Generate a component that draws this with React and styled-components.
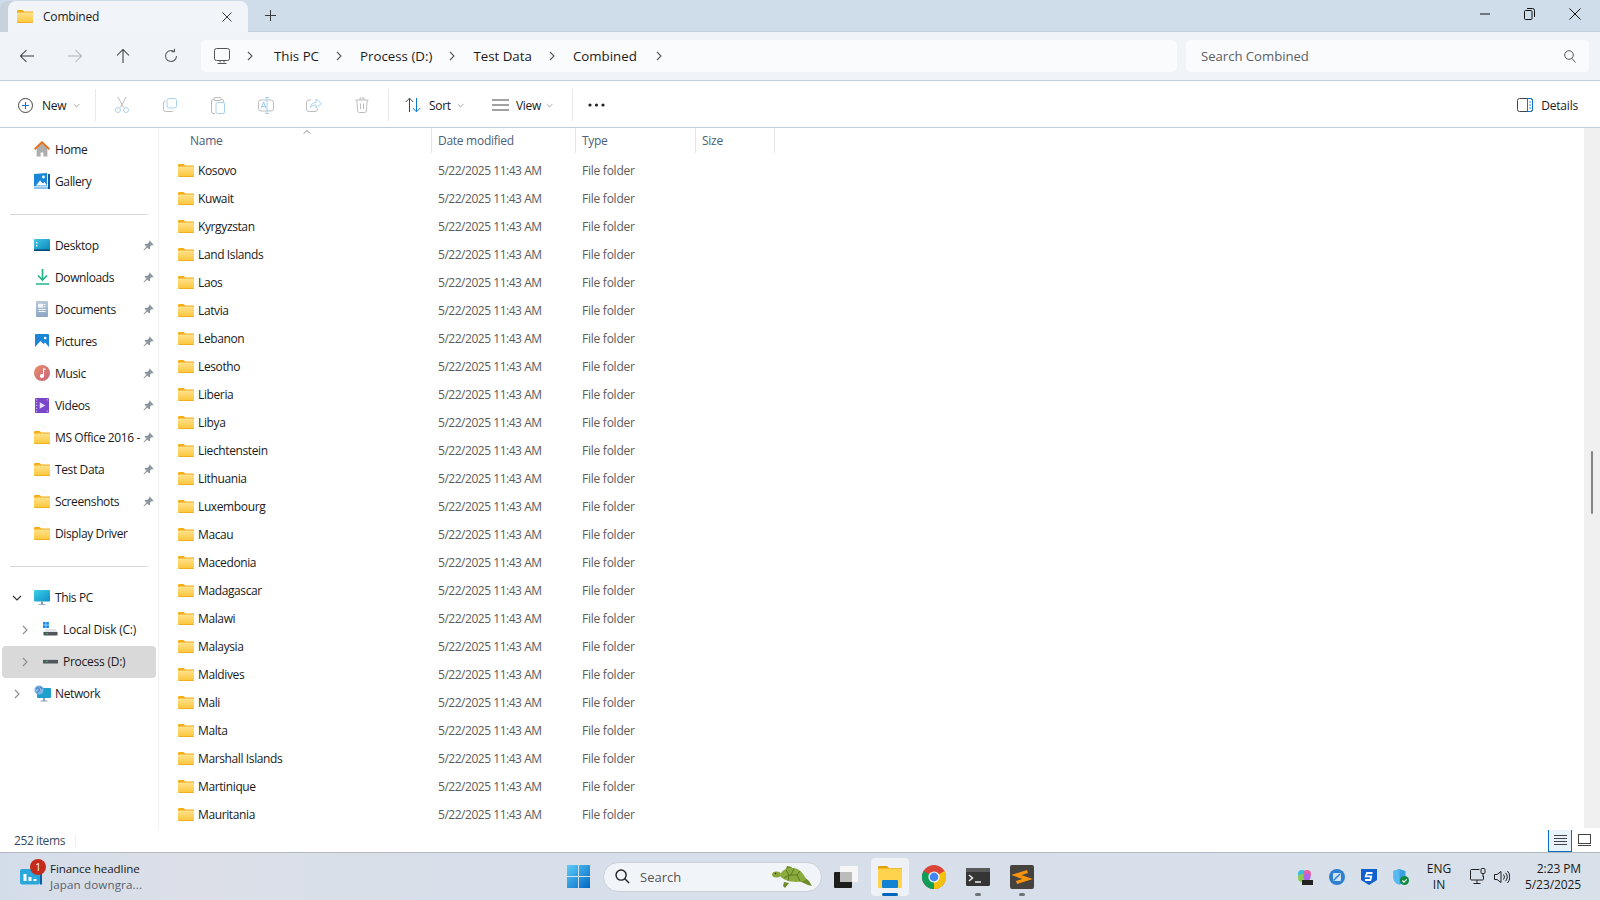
import React from "react";
import styled, { createGlobalStyle } from "styled-components";

const Global = createGlobalStyle`
  html, body { margin: 0; padding: 0; width: 1600px; height: 900px; overflow: hidden; background: #fff; }
  * { box-sizing: border-box; }
  svg { display: block; flex: none; }
`;
const FONT = `"Open Sans", "Noto Sans", "Liberation Sans", sans-serif`;

const Win = styled.div`
  width: 1600px; height: 900px; display: flex; flex-direction: column;
  font-family: ${FONT}; color: #1a1a1a; font-size: 12px; overflow: hidden;
`;
const TitleBar = styled.div`
  height: 32px; flex: none; background: #cfdcea; display: flex; align-items: flex-end; padding-left: 8px;
  border-bottom: 1px solid #c2d0de;
`;
const Tab = styled.div`
  width: 240px; height: 31px; background: #f1f4f8; border-radius: 8px 8px 0 0; display: flex; align-items: center;
  padding: 0 16px 0 9px; gap: 10px; font-size: 12px; margin-bottom: -1px; box-shadow: -8px 0 0 #c8d2dd;
`;
const TabTitle = styled.span` flex: 1; letter-spacing: -0.2px; `;
const NewTab = styled.div` width: 34px; margin-left: 5px; height: 31px; display: flex; align-items: center; justify-content: center; `;
const WinButtons = styled.div` margin-left: auto; display: flex; height: 31px; align-items: flex-start; padding-right: 3px; `;
const WinBtn = styled.div` width: 45px; height: 28px; display: flex; align-items: center; justify-content: center; `;

const NavBar = styled.div`
  height: 49px; flex: none; background: #f0f4f8; border-bottom: 1px solid #c0cedb; display: flex; align-items: center;
  padding: 0 11px 0 0;
`;
const NavBtns = styled.div` display: flex; width: 201px; padding-left: 3px; `;
const NavBtn = styled.div` width: 48px; height: 30px; display: flex; align-items: center; justify-content: center; `;
const Address = styled.div`
  width: 976px; height: 32px; background: #fafbfd; border-radius: 5px; display: flex; align-items: center; padding-left: 13px; font-size: 13.3px;
`;
const PcGlyph = styled.div` margin-right: 15px; `;
const Crumb = styled.span` margin: 0 ${p => p.$last ? 17 : 15}px 0 ${p => p.$first ? 19 : 16}px; `;
const SearchBox = styled.div`
  width: 403px; height: 32px; margin-left: 9px; background: #fafbfd; border-radius: 5px; display: flex; align-items: center;
  justify-content: space-between; padding: 0 13px 0 15px; color: #5f6062; font-size: 13.2px; letter-spacing: -0.05px;
`;

const Toolbar = styled.div`
  height: 47px; flex: none; background: #fff; border-bottom: 1px solid #c0cedb; display: flex; align-items: center; padding: 2px 22px 0 18px;
`;
const ToolSep = styled.div` width: 1px; height: 32px; background: #e8e8e8; margin: ${p => p.$m || "0"}; `;
const ToolBtn = styled.div`
  display: flex; align-items: center; gap: ${p => p.$gap || 8}px; letter-spacing: -0.3px; width: ${p => p.$w}px;
`;
const Caret = styled.span` margin-left: -2px; `;
const GhostIcons = styled.div` display: flex; margin-left: 2px; `;
const Ghost = styled.div` width: 48px; height: 30px; display: flex; align-items: center; justify-content: center; `;
const Details = styled.div` margin-left: auto; display: flex; align-items: center; gap: 8px; letter-spacing: -0.2px; `;

const Main = styled.div` flex: 1; display: flex; min-height: 0; background: #fff; position: relative; overflow: hidden; `;
const Sidebar = styled.div`
  width: 159px; flex: none; border-right: 1px solid #f0f0f0; padding: 6px 2px 0 2px; display: flex; flex-direction: column;
`;
const NavItem = styled.div`
  height: 32px; flex: none; display: flex; align-items: center; padding: 0 0 2px ${p => p.$indent ? 40 : 32}px; gap: 5px; border-radius: 4px;
  position: relative; background: ${p => p.$sel ? "#d9d9d9" : "transparent"}; letter-spacing: ${p => p.$indent ? -0.25 : -0.38}px; font-size: 12px; white-space: nowrap;
`;
const Chevron = styled.div` position: absolute; left: ${p => p.$x}px; top: 11px; `;
const Pin = styled.div` position: absolute; left: 141px; top: 10px; `;
const Divider = styled.div` height: 1px; flex: none; background: #d8d8d8; margin: 16px 8px 15px; `;
const IconSlot = styled.div` width: 16px; height: 18px; display: flex; align-items: center; justify-content: center; flex: none; `;
const FileArea = styled.div` flex: 1; min-width: 0; position: relative; display: flex; flex-direction: column; `;
const HeaderRow = styled.div` height: 25px; display: flex; color: #4c607a; font-size: 12px; letter-spacing: -0.28px; flex: none; `;
const HeadCell = styled.div`
  width: ${p => p.$w}px; border-right: 1px solid #e5e5e5; padding-left: ${p => p.$pad}px; padding-top: 4px; position: relative;
`;
const SortMark = styled.div` position: absolute; left: 144px; top: 0; `;
const Rows = styled.div` display: flex; flex-direction: column; padding-top: 3px; `;
const Row = styled.div` height: 28px; display: flex; align-items: center; flex: none; `;
const NameCell = styled.div` width: 272px; padding-left: 19px; display: flex; align-items: center; gap: 4px; letter-spacing: -0.38px; `;
const MetaCell = styled.div` width: ${p => p.$w}px; color: #5c5c5c; letter-spacing: ${p => p.$ls}px; padding-left: ${p => p.$pad}px; `;

const ScrollTrack = styled.div` position: absolute; top: 0; right: 0; width: 16px; height: 700px; background: #f0f0f0; `;
const ScrollThumb = styled.div` position: absolute; left: 7px; top: 323px; width: 2px; height: 63px; background: #848484; border-radius: 1px; `;

const StatusBar = styled.div` height: 22px; flex: none; background: #fff; display: flex; align-items: center; padding: 0 4px 2px 14px; color: #3a4a60; letter-spacing: -0.4px; `;
const StatusSep = styled.div` width: 1px; height: 13px; background: #efefef; margin-left: 10px; `;
const ViewBtns = styled.div` margin-left: auto; display: flex; align-self: flex-end; height: 24px; margin-bottom: -2px; `;
const ViewBtn = styled.div`
  width: 24px; height: 24px; display: flex; align-items: center; justify-content: center;
  border: 1px solid ${p => p.$on ? "#0a6fc2" : "transparent"}; background: ${p => p.$on ? "#e8f2fa" : "transparent"};
`;
const Taskbar = styled.div`
  height: 48px; flex: none; background: linear-gradient(90deg, #d3dde9, #dcdfe8 12%, #d6dfea 30%, #d8e0ea 100%);
  border-top: 1px solid #b4b8bf; display: grid; grid-template-columns: 540px 520px 1fr; align-items: center;
`;
const Widget = styled.div` display: flex; align-items: center; padding-left: 20px; position: relative; `;
const Badge = styled.div`
  position: absolute; left: 30px; top: -2px; width: 16px; height: 16px; border-radius: 50%; background: #c42b1c; color: #fff; font-size: 10px;
  display: flex; align-items: center; justify-content: center;
`;
const WidgetText = styled.div` margin-left: 8px; font-size: 11.6px; line-height: 16px; letter-spacing: -0.1px; `;
const Muted = styled.div` color: #5a6068; letter-spacing: 0.13px; `;
const TaskCenter = styled.div` display: flex; align-items: center; height: 47px; `;
const SearchPill = styled.div`
  width: 219px; height: 30px; margin-left: 5px; border-radius: 15px; background: #f1f4f8; border: 1px solid #c9d0d8; display: flex; align-items: center;
  padding: 0 7px 0 11px; color: #555; font-size: 13px;
`;
const PillLabel = styled.span` margin-left: 10px; flex: 1; `;
const TaskIcon = styled.div`
  width: ${p => p.$on ? 38 : 40}px; height: 38px; margin-left: ${p => p.$ml || 4}px; border-radius: 4px; display: flex; align-items: center; justify-content: center; position: relative;
  background: ${p => p.$on ? "#eef2f7" : "transparent"};
`;
const RunDot = styled.div`
  position: absolute; bottom: 0; left: 50%; transform: translateX(-50%); height: 3px; border-radius: 2px;
  width: ${p => p.$on ? 16 : 6}px; background: ${p => p.$on ? "#0067c0" : "#6f7478"};
`;
const Tray = styled.div` display: flex; align-items: center; justify-content: flex-end; height: 47px; padding-right: 19px; `;
const TrayIcon = styled.div` width: ${p => p.$w || 32}px; display: flex; justify-content: center; `;
const Lang = styled.div` font-size: 12px; line-height: 16px; text-align: center; width: 44px; `;
const Clock = styled.div` font-size: 12px; line-height: 16px; text-align: right; margin-left: 15px; letter-spacing: -0.1px; `;

const FolderIcon = ({ s = 16 }) => (
  <svg width={s} height={s * 0.8125} viewBox="0 0 16 13">
    <defs><linearGradient id="fold" x1="0" x2="0" y1="0" y2="1"><stop offset="0" stopColor="#ffe28e" /><stop offset="1" stopColor="#fcc93f" /></linearGradient></defs>
    <path d="M0 1.2A1.2 1.2 0 0 1 1.2 0h4.3l1.8 1.6H16V4H0z" fill="#f4ae16" />
    <rect x="0" y="2" width="16" height="11" rx="1" fill="#eaa818" />
    <rect x="0" y="2.4" width="16" height="9.8" rx=".6" fill="url(#fold)" />
  </svg>
);
const Chev = ({ dir = "right", c = "#5a5a5a", s = 10 }) => (
  <svg width={s} height={s} viewBox="0 0 10 10" fill="none" stroke={c} strokeWidth="1.1">
    <path d={dir === "right" ? "M3 1l4 4-4 4" : dir === "down" ? "M1 3l4 4 4-4" : "M1 7l4-4 4 4"} />
  </svg>
);
const PinIcon = () => (
  <svg width="11" height="11" viewBox="0 0 12 12" fill="#8c959d">
    <path d="M7.2 .6l4.2 4.2-1 .8-.8-.2-2 2 .2 2-1 1-2-2.2L1 11.4 0.6 11l3.2-3.8-2.2-2 1-1 2 .2 2-2-.2-.8z" />
  </svg>
);
const HomeI = () => (
  <svg width="16" height="16" viewBox="0 0 16 16"><path d="M2.6 7.5V15.4h4v-4h2.8v4h4V7.5L8 2.4z" fill="#aeaeae" /><path d="M.6 8.2L8 1.2l7.4 7" fill="none" stroke="#e46f1b" strokeWidth="1.9" /></svg>
);
const GalleryI = () => (
  <svg width="16" height="16" viewBox="0 0 16 16"><path d="M0 1l13-1v13H0z" fill="#1a86d8" /><path d="M2 12.5l4-5 3 3 1.5-1.5L13 12.5z" fill="#fff" /><circle cx="9.5" cy="4" r="1.4" fill="#fff" /><path d="M0 13.5h14V16H0z" fill="#8cc4ec" /><path d="M14 1h2v15h-2z" fill="#0f5fa8" /></svg>
);
const DesktopI = () => (
  <svg width="16" height="12" viewBox="0 0 16 12"><defs><linearGradient id="dg" x1="0" x2="1" y1="0" y2="1"><stop offset="0" stopColor="#42c6e8" /><stop offset="1" stopColor="#0a86b8" /></linearGradient></defs><rect width="16" height="11" rx="1" fill="url(#dg)" /><rect y="10.4" width="16" height="1.6" fill="#0a4a78" /><rect x="2" y="3" width="1.4" height="1.4" fill="#fff" /><rect x="2" y="6" width="1.4" height="1.4" fill="#fff" /></svg>
);
const DownloadI = () => (
  <svg width="13" height="16" viewBox="0 0 13 16" fill="none" stroke="#22b58c" strokeWidth="1.7"><path d="M6.5 0v11M2 6.5l4.5 4.5L11 6.5M0 15h13" /></svg>
);
const DocI = () => (
  <svg width="12" height="16" viewBox="0 0 12 16"><defs><linearGradient id="dc" x1="0" x2="0" y1="0" y2="1"><stop offset="0" stopColor="#b8c8d8" /><stop offset="1" stopColor="#8ca6c4" /></linearGradient></defs><rect width="12" height="16" rx="1" fill="url(#dc)" /><path d="M2.5 3.2h4v3h-4zM7.5 3.5h2M7.5 5.7h2M2.5 8.5h7M2.5 10.5h7" stroke="#f4f8fb" strokeWidth="1" fill="#f4f8fb" /></svg>
);
const PicI = () => (
  <svg width="14" height="14" viewBox="0 0 14 14"><rect width="14" height="14" rx="1" fill="#1c86d6" /><path d="M0 13l5.5-6 3 3 1.5-1.5L14 13v1H0z" fill="#fff" /><circle cx="10.2" cy="4" r="1.3" fill="#fff" /></svg>
);
const MusicI = () => (
  <svg width="16" height="16" viewBox="0 0 16 16"><defs><linearGradient id="mg" x1="0" x2="1" y1="0" y2="1"><stop offset="0" stopColor="#e8906a" /><stop offset="1" stopColor="#c8627e" /></linearGradient></defs><circle cx="8" cy="8" r="8" fill="url(#mg)" /><path d="M9 3.5h2.4v1.6H10V11a2 2 0 1 1-1-1.7z" fill="#fff" /></svg>
);
const VideoI = () => (
  <svg width="14" height="15" viewBox="0 0 15 16"><rect width="15" height="16" rx="1" fill="#7a45c8" /><path d="M5 4.5l6 3.5-6 3.5z" fill="#e8dcfb" /><path d="M1 2h1.4M1 5h1.4M1 8h1.4M1 11h1.4M1 14h1.4M12.6 2H14M12.6 14H14" stroke="#e0d0f8" strokeWidth="1" /></svg>
);
const ThisPcI = () => (
  <svg width="16" height="15" viewBox="0 0 16 15"><defs><linearGradient id="pg" x1="0" x2="1" y1="0" y2="1"><stop offset="0" stopColor="#3fd0ea" /><stop offset="1" stopColor="#0d8fc4" /></linearGradient></defs><rect width="16" height="11.5" rx="1" fill="url(#pg)" /><path d="M7 11.5h2V14H7z" fill="#7f98a8" /><path d="M4.5 14h7v1h-7z" fill="#9ab0bd" /></svg>
);
const DiskCI = () => (
  <svg width="15" height="14" viewBox="0 0 15 14"><path d="M0 0h2.7v2.7H0zM3.2 0h2.7v2.7H3.2zM0 3.2h2.7v2.7H0zM3.2 3.2h2.7v2.7H3.2z" fill="#1a8ce8" /><path d="M3 7h9l2.5 3v3H.5v-3z" fill="#e0e4e8" /><rect x=".5" y="10" width="14" height="3.4" rx=".6" fill="#50565c" /><rect x="3" y="11.2" width="1.6" height="1" fill="#4ed05a" /></svg>
);
const DiskDI = () => (
  <svg width="15" height="5" viewBox="0 0 15 5"><rect y=".5" width="15" height="4" rx=".6" fill="#50565c" /><rect y="0" width="15" height="1" fill="#c8ccd0" /><rect x="3" y="2" width="1.6" height="1" fill="#4ed05a" /></svg>
);
const NetI = () => (
  <svg width="17" height="17" viewBox="0 0 17 17"><rect x="3" y="3" width="14" height="10" rx="1" fill="#1da0cc" /><path d="M9 13h2v2.5H9zM6.5 15.5h7v1h-7z" fill="#8aa0ae" /><circle cx="5" cy="5" r="4.6" fill="#7fb4e4" /><path d="M2 3.5c2-1.5 3-.5 3.4.8S3.6 6.6 3 8M6 1.4c.5 1.5 1.6 2 2.6 1.6" stroke="#2a70b8" fill="none" /></svg>
);
const Turtle = () => (
  <svg width="42" height="22" viewBox="0 0 42 22">
    <path d="M27 15l9 4 4 1-3-5-6-5z" fill="#6f8a28" />
    <path d="M12 16l-1 4 2 2 4-5z" fill="#6f8a28" />
    <path d="M14 3l1-3 5 1-2 3z" fill="#6f8a28" />
    <ellipse cx="4.5" cy="8.5" rx="4.5" ry="3" fill="#8da63a" />
    <circle cx="3.5" cy="7.5" r=".8" fill="#222" />
    <path d="M8 10C9 4 15 1.5 21 2c6 .4 11 5 13 12-6 3-20 3-26-4z" fill="#8cab3e" />
    <path d="M14 4l3 5-5 3M17 9h8l3-4M25 9l3 6M17 9l-1 6M22 2.5l-3 6.5" stroke="#5a7420" strokeWidth=".9" fill="none" />
  </svg>
);

const line = { fill: "none", stroke: "#3a3a3a", strokeWidth: 1 };
const Arrow = ({ d, c = "#3a3a3a" }) => (
  <svg width="16" height="16" viewBox="0 0 16 16" fill="none" stroke={c} strokeWidth="1.05"><path d={d} /></svg>
);
const ghost = { fill: "none", stroke: "#a9d2ef", strokeWidth: 1 };
const ghostGrey = { fill: "none", stroke: "#bdbdbd", strokeWidth: 1 };

const GhostCut = () => (
  <svg width="14" height="16" viewBox="0 0 14 16"><path d="M3 0l5.6 10.5M11 0L5.4 10.5" {...ghostGrey} /><circle cx="3" cy="13" r="2.5" {...ghost} /><circle cx="11" cy="13" r="2.5" {...ghost} /></svg>
);
const GhostCopy = () => (
  <svg width="14" height="14" viewBox="0 0 14 14"><rect x="4" y=".5" width="9.5" height="9.5" rx="2" {...ghost} /><path d="M2.5 3A2 2 0 0 0 .5 5v6.5a2 2 0 0 0 2 2H9a2 2 0 0 0 1.6-1" {...ghostGrey} /></svg>
);
const GhostPaste = () => (
  <svg width="14" height="17" viewBox="0 0 14 17"><path d="M3 2.5H2A1.5 1.5 0 0 0 .5 4v11A1.5 1.5 0 0 0 2 16.5h2M10 2.5h1A1.5 1.5 0 0 1 12.5 4v1" {...ghostGrey} /><rect x="3" y=".5" width="7" height="3" rx="1" {...ghostGrey} /><rect x="5" y="5.5" width="8.5" height="11" rx="1.5" {...ghost} /></svg>
);
const GhostRename = () => (
  <svg width="16" height="17" viewBox="0 0 16 17"><rect x=".5" y="3" width="15" height="11" rx="2.5" {...ghostGrey} /><path d="M9 .5v16M7 .5h4M7 16.5h4" {...ghost} /><path d="M3 11.5l2.6-6.5L8.2 11.5M4 9.5h3.4" stroke="#9cc8ea" fill="none" /></svg>
);
const GhostShare = () => (
  <svg width="16" height="14" viewBox="0 0 16 14"><path d="M5 2H3A2.5 2.5 0 0 0 .5 4.5V11A2.5 2.5 0 0 0 3 13.5h6A2.5 2.5 0 0 0 11.5 11v-.5" {...ghostGrey} /><path d="M4.5 9.5C4.5 6.5 7 4.5 10 4.5V1l5.5 4.5L10 10V7c-2.4 0-4.2.8-5.5 2.5z" {...ghost} /></svg>
);
const GhostTrash = () => (
  <svg width="14" height="16" viewBox="0 0 14 16"><path d="M.5 3h13M5 3V1h4v2M1.8 3l.8 11a1.7 1.7 0 0 0 1.7 1.5h5.4a1.7 1.7 0 0 0 1.7-1.5l.8-11M5.5 6.5v5.5M8.5 6.5v5.5" {...ghostGrey} /></svg>
);

const names = ["Kosovo","Kuwait","Kyrgyzstan","Land Islands","Laos","Latvia","Lebanon","Lesotho","Liberia","Libya","Liechtenstein","Lithuania","Luxembourg","Macau","Macedonia","Madagascar","Malawi","Malaysia","Maldives","Mali","Malta","Marshall Islands","Martinique","Mauritania"];
const pinned = [
  ["Desktop", <DesktopI key="a" />], ["Downloads", <DownloadI key="b" />], ["Documents", <DocI key="c" />], ["Pictures", <PicI key="d" />],
  ["Music", <MusicI key="e" />], ["Videos", <VideoI key="f" />], ["MS Office 2016 -", <FolderIcon key="g" />], ["Test Data", <FolderIcon key="h" />], ["Screenshots", <FolderIcon key="i" />],
];

export default function App() {
  return (
    <Win>
      <Global />
      <TitleBar>
        <Tab>
          <FolderIcon />
          <TabTitle>Combined</TabTitle>
          <svg width="10" height="10" viewBox="0 0 10 10" {...line}><path d="M.5.5l9 9M9.5.5l-9 9" /></svg>
        </Tab>
        <NewTab>
          <svg width="11" height="11" viewBox="0 0 11 11" {...line}><path d="M5.5 0v11M0 5.5h11" /></svg>
        </NewTab>
        <WinButtons>
          <WinBtn><svg width="10" height="2" viewBox="0 0 10 2"><path d="M0 1h10" stroke="#111" /></svg></WinBtn>
          <WinBtn><svg width="11" height="12" viewBox="0 0 11 12" fill="none" stroke="#111"><rect x=".5" y="2.5" width="7.5" height="9" rx="1" /><path d="M3 .5h5.5a2 2 0 0 1 2 2V9" /></svg></WinBtn>
          <WinBtn><svg width="12" height="12" viewBox="0 0 12 12" fill="none" stroke="#111"><path d="M.5.5l11 11M11.5.5l-11 11" /></svg></WinBtn>
        </WinButtons>
      </TitleBar>
      <NavBar>
        <NavBtns>
          <NavBtn><Arrow d="M15 8H1.5M7.5 2L1.5 8l6 6" /></NavBtn>
          <NavBtn><Arrow c="#adb3b9" d="M1 8h13.5M8.5 2l6 6-6 6" /></NavBtn>
          <NavBtn><Arrow d="M8 15V1.5M2 7.5l6-6 6 6" /></NavBtn>
          <NavBtn><Arrow c="#5a5a5a" d="M13.5 8a5.5 5.5 0 1 1-2.3-4.5M11.5 .8v3h-3" /></NavBtn>
        </NavBtns>
        <Address>
          <PcGlyph>
            <svg width="16" height="16" viewBox="0 0 16 16" fill="none" stroke="#555"><rect x=".5" y=".5" width="15" height="12" rx="2" /><path d="M6 13v1.5M10 13v1.5M3.5 15.5h9" /></svg>
          </PcGlyph>
          <Chev />
          <Crumb $first>This PC</Crumb>
          <Chev />
          <Crumb>Process (D:)</Crumb>
          <Chev />
          <Crumb>Test Data</Crumb>
          <Chev />
          <Crumb $last>Combined</Crumb>
          <Chev />
        </Address>
        <SearchBox>
          <span>Search Combined</span>
          <svg width="12" height="13" viewBox="0 0 12 13" fill="none" stroke="#555"><circle cx="5" cy="5" r="4.3" /><path d="M8 8.5l3.5 4" /></svg>
        </SearchBox>
      </NavBar>
      <Toolbar>
        <ToolBtn $w={77} $gap={9}>
          <svg width="15" height="15" viewBox="0 0 15 15" fill="none"><circle cx="7.5" cy="7.5" r="7" stroke="#444" /><path d="M7.5 4v7M4 7.5h7" stroke="#0a78d4" strokeWidth="1.1" /></svg>
          <span>New</span>
          <Caret><Chev dir="down" c="#888" s={7} /></Caret>
        </ToolBtn>
        <ToolSep />
        <GhostIcons>
          <Ghost><GhostCut /></Ghost>
          <Ghost><GhostCopy /></Ghost>
          <Ghost><GhostPaste /></Ghost>
          <Ghost><GhostRename /></Ghost>
          <Ghost><GhostShare /></Ghost>
          <Ghost><GhostTrash /></Ghost>
        </GhostIcons>
        <ToolSep $m="0 16px 0 2px" />
        <ToolBtn $w={87}>
          <svg width="16" height="16" viewBox="0 0 16 16" fill="none"><path d="M4.5 15V1.5M.8 5L4.5 1.2 8.2 5" stroke="#444" /><path d="M11.5 1v13.5M7.8 11l3.7 3.8 3.7-3.8" stroke="#0a78d4" /></svg>
          <span>Sort</span>
          <Caret><Chev dir="down" c="#888" s={7} /></Caret>
        </ToolBtn>
        <ToolBtn $w={80} $gap={7}>
          <svg width="17" height="12" viewBox="0 0 17 12" stroke="#444"><path d="M0 1h17M0 6h17M0 11h17" /></svg>
          <span>View</span>
          <Caret><Chev dir="down" c="#888" s={7} /></Caret>
        </ToolBtn>
        <ToolSep $m="0 15px 0 0" />
        <svg width="17" height="4" viewBox="0 0 17 4" fill="#222"><circle cx="2" cy="2" r="1.6" /><circle cx="8.5" cy="2" r="1.6" /><circle cx="15" cy="2" r="1.6" /></svg>
        <Details>
          <svg width="16" height="14" viewBox="0 0 16 14" fill="none"><rect x=".5" y=".5" width="15" height="13" rx="2" stroke="#444" /><path d="M10.5.5h3a2 2 0 0 1 2 2v9a2 2 0 0 1-2 2h-3z" stroke="#0a78d4" /><path d="M12.3 4h1.6M12.3 7h1.6M12.3 10h1.6" stroke="#0a78d4" /></svg>
          <span>Details</span>
        </Details>
      </Toolbar>
      <Main>
        <Sidebar>
          <NavItem><IconSlot><HomeI /></IconSlot>Home</NavItem>
          <NavItem><IconSlot><GalleryI /></IconSlot>Gallery</NavItem>
          <Divider />
          {pinned.map(([label, icon]) => (
            <NavItem key={label}>
              <IconSlot>{icon}</IconSlot>
              {label}
              <Pin><PinIcon /></Pin>
            </NavItem>
          ))}
          <NavItem><IconSlot><FolderIcon /></IconSlot>Display Driver</NavItem>
          <Divider />
          <NavItem><Chevron $x={10}><Chev dir="down" c="#333" /></Chevron><IconSlot><ThisPcI /></IconSlot>This PC</NavItem>
          <NavItem $indent><Chevron $x={18}><Chev c="#8a8a8a" /></Chevron><IconSlot><DiskCI /></IconSlot>Local Disk (C:)</NavItem>
          <NavItem $indent $sel><Chevron $x={18}><Chev c="#8a8a8a" /></Chevron><IconSlot><DiskDI /></IconSlot>Process (D:)</NavItem>
          <NavItem><Chevron $x={10}><Chev c="#8a8a8a" /></Chevron><IconSlot><NetI /></IconSlot>Network</NavItem>
        </Sidebar>
        <FileArea>
          <HeaderRow>
            <HeadCell $w={273} $pad={31}>Name<SortMark><Chev dir="up" c="#777" s={8} /></SortMark></HeadCell>
            <HeadCell $w={144} $pad={6}>Date modified</HeadCell>
            <HeadCell $w={120} $pad={6}>Type</HeadCell>
            <HeadCell $w={79} $pad={6}>Size</HeadCell>
          </HeaderRow>
          <Rows>
            {names.map(n => (
              <Row key={n}>
                <NameCell><FolderIcon />{n}</NameCell>
                <MetaCell $w={144} $pad={7} $ls={-0.47}>5/22/2025 11:43 AM</MetaCell>
                <MetaCell $w={120} $pad={7} $ls={-0.25}>File folder</MetaCell>
              </Row>
            ))}
          </Rows>
          <ScrollTrack><ScrollThumb /></ScrollTrack>
        </FileArea>
      </Main>
      <StatusBar>
        252 items
        <StatusSep />
        <ViewBtns>
          <ViewBtn $on><svg width="13" height="11" viewBox="0 0 13 11" stroke="#444"><path d="M0 .5h13M0 3.5h13M0 6.5h13M0 9.5h13" /></svg></ViewBtn>
          <ViewBtn><svg width="13" height="12" viewBox="0 0 13 12" fill="none" stroke="#444"><rect x=".5" y=".5" width="12" height="9" /><path d="M0 11.5h13" /></svg></ViewBtn>
        </ViewBtns>
      </StatusBar>
      <Taskbar>
        <Widget>
          <svg width="22" height="16" viewBox="0 0 22 16"><rect width="20" height="15.5" rx="2" fill="#2aa8dc" /><rect x="20" y="2" width="2" height="13.5" fill="#0a5fa8" /><path d="M3.5 5h3v7h-3zM8.5 8h3v4h-3zM13.5 10h3v2h-3z" fill="#fff" /></svg>
          <Badge>1</Badge>
          <WidgetText>Finance headline<Muted>Japan downgra...</Muted></WidgetText>
        </Widget>
        <TaskCenter>
          <TaskIcon $ml={18}>
            <svg width="23" height="23" viewBox="0 0 24 24"><defs><linearGradient id="w" x1="0" y1="0" x2="1" y2="1"><stop offset="0" stopColor="#5ccdf8" /><stop offset="1" stopColor="#0067c4" /></linearGradient></defs><path d="M0 0h11.5v11.5H0zM12.5 0H24v11.5H12.5zM0 12.5h11.5V24H0zM12.5 12.5H24V24H12.5z" fill="url(#w)" /></svg>
          </TaskIcon>
          <SearchPill>
            <svg width="15" height="15" viewBox="0 0 16 16" fill="none" stroke="#222" strokeWidth="1.5"><circle cx="6.5" cy="6.5" r="5.4" /><path d="M10.5 10.5L15 15" /></svg>
            <PillLabel>Search</PillLabel>
            <Turtle />
          </SearchPill>
          <TaskIcon $ml={4}>
            <svg width="24" height="22" viewBox="0 0 24 22"><rect x="6" y="0" width="18" height="16" rx="1" fill="#f6f6f6" /><rect y="6" width="18" height="16" rx="1" fill="#1d1d1d" /><rect x="6" y="6" width="12" height="10" fill="#bcbcbc" /></svg>
          </TaskIcon>
          <TaskIcon $on $ml={5}>
            <svg width="24" height="22" viewBox="0 0 24 22"><path d="M0 1a1 1 0 0 1 1-1h8l2 2h13v3H0z" fill="#e2a20e" /><rect y="2.5" width="24" height="19.5" rx="1" fill="#ffd34e" /><rect x="4" y="14" width="16" height="8" rx="1" fill="#1283d2" /></svg>
            <RunDot $on />
          </TaskIcon>
          <TaskIcon $ml={5}>
            <svg width="24" height="24" viewBox="0 0 24 24"><circle cx="12" cy="12" r="12" fill="#db4437" /><path d="M12 12L22.4 6A12 12 0 0 1 12 24z" fill="#f4c20d" /><path d="M12 12L12 24A12 12 0 0 1 1.6 6z" fill="#0f9d58" /><circle cx="12" cy="12" r="5.6" fill="#fff" /><circle cx="12" cy="12" r="4.4" fill="#4285f4" /></svg>
          </TaskIcon>
          <TaskIcon>
            <svg width="24" height="18" viewBox="0 0 24 18"><rect width="24" height="18" rx="1.5" fill="#353535" /><rect width="24" height="4" fill="#5a5a5a" /><path d="M3 7l3.5 3L3 13" stroke="#eee" strokeWidth="1.5" fill="none" /><path d="M9 14h6" stroke="#eee" strokeWidth="1.5" /></svg>
            <RunDot />
          </TaskIcon>
          <TaskIcon>
            <svg width="24" height="24" viewBox="0 0 24 24"><rect width="24" height="24" rx="2" fill="#46433f" /><path d="M17.5 6.5L6.5 10l11 4-11 3.5" fill="none" stroke="#f7930e" strokeWidth="3.4" /></svg>
            <RunDot />
          </TaskIcon>
        </TaskCenter>
        <Tray>
          <TrayIcon>
            <svg width="16" height="16" viewBox="0 0 16 16"><circle cx="5" cy="5" r="4" fill="#32c0e0" /><circle cx="10" cy="5" r="4" fill="#e860a8" /><circle cx="5" cy="9" r="4" fill="#8ccc50" /><circle cx="10" cy="8" r="3.5" fill="#a868e8" /><rect x="5" y="11" width="11" height="5" fill="#222" /></svg>
          </TrayIcon>
          <TrayIcon>
            <svg width="16" height="16" viewBox="0 0 16 16"><circle cx="8" cy="8" r="8" fill="#2f7fd0" /><rect x="4" y="4" width="8" height="8" rx="1" fill="#cfe3f6" /><path d="M4.5 11.5L11 5" stroke="#2f7fd0" strokeWidth="1.4" /></svg>
          </TrayIcon>
          <TrayIcon>
            <svg width="16" height="16" viewBox="0 0 16 16"><path d="M0 0h16v11l-8 5-8-5z" fill="#1260d0" /><path d="M11.5 4H6L4.8 7.4h5.4L9.4 11H4" fill="none" stroke="#fff" strokeWidth="1.8" /></svg>
          </TrayIcon>
          <TrayIcon>
            <svg width="16" height="16" viewBox="0 0 16 16"><path d="M6.5 0l6 2v6a7 7 0 0 1-6 7.4A7 7 0 0 1 .5 8V2z" fill="#3aa0e0" /><path d="M6.5 0v15.4A7 7 0 0 1 .5 8V2z" fill="#58b8f0" /><circle cx="11.5" cy="11.5" r="4.5" fill="#108a3e" /><path d="M9.3 11.5l1.6 1.6 2.8-2.8" stroke="#fff" strokeWidth="1.2" fill="none" /></svg>
          </TrayIcon>
          <Lang>ENG<br />IN</Lang>
          <TrayIcon $w={33}>
            <svg width="16" height="17" viewBox="0 0 16 17" fill="none" stroke="#222"><path d="M9.5 1.5H1.5a1 1 0 0 0-1 1V11a1 1 0 0 0 1 1h11a1 1 0 0 0 1-1V8" /><path d="M7 12v3M3.5 15.5h7" /><rect x="11" y=".5" width="4" height="5" rx="1" /><path d="M13 5.5V9" /></svg>
          </TrayIcon>
          <TrayIcon $w={16}>
            <svg width="16" height="14" viewBox="0 0 16 14" fill="none" stroke="#222"><path d="M.5 4.5h2.5L7 1.5v11L3 9.5H.5z" /><path d="M9.5 4.5a4 4 0 0 1 0 5M11.5 2.8a6.5 6.5 0 0 1 0 8.4M13.5 1a9 9 0 0 1 0 12" /></svg>
          </TrayIcon>
          <Clock>2:23 PM<br />5/23/2025</Clock>
        </Tray>
      </Taskbar>
    </Win>
  );
}
